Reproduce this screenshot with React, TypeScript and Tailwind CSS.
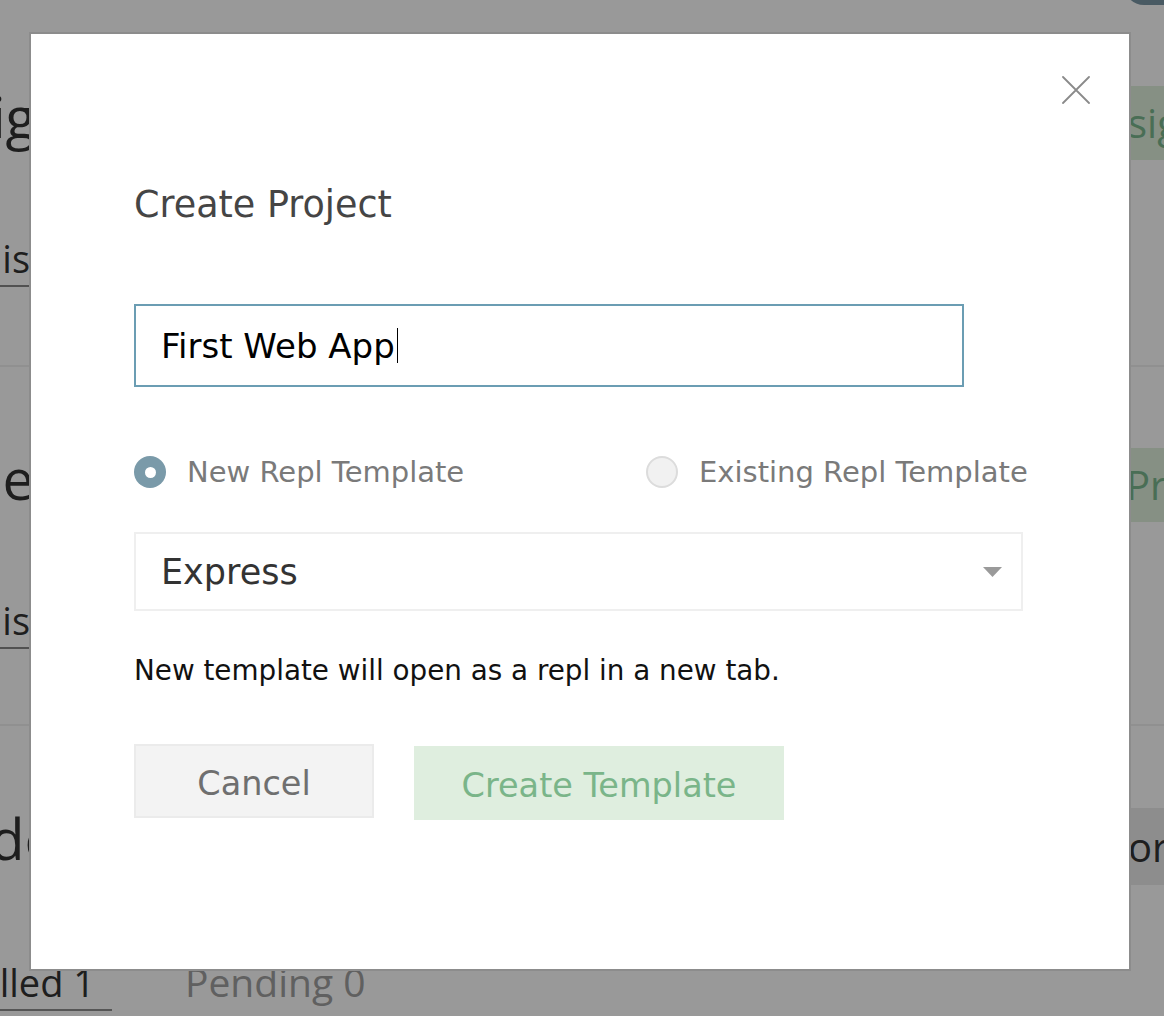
import React from "react";

const BG_FONT = { fontFamily: '"Open Sans", "Liberation Sans", sans-serif' };
const MODAL_FONT = { fontFamily: '"DejaVu Sans", "Liberation Sans", sans-serif' };

function BackgroundPage() {
  return (
    <div className="w-[1164px] h-[1016px] overflow-hidden bg-white flex flex-col" style={BG_FONT}>
      {/* header strip with avatar pill */}
      <div className="h-[5px] flex justify-end">
        <div className="w-[60px] h-[40px] -mt-[35px] mr-[-20px] rounded-[20px] bg-[#7b96a5] shrink-0" />
      </div>

      {/* row 1 */}
      <div className="h-[362px] border-b-2 border-[#f0f0f0] flex items-start pt-[81px]">
        <div className="flex flex-col">
          <div className="w-[36px] flex justify-end">
            <span className="whitespace-nowrap text-[56px] leading-[60px] text-[#333]">Desig</span>
          </div>
          <div className="w-[30px] flex justify-end mt-[90px]">
            <span className="whitespace-nowrap text-[38px] leading-[44px] text-[#333] pb-[5px] border-b-2 border-[#888]">This</span>
          </div>
        </div>
        <div className="flex-1" />
        <div className="w-[64px] h-[74px] shrink-0 bg-[#e0f0dc] flex items-center pl-[28px]">
          <span className="whitespace-nowrap text-[40px] leading-[48px] text-[#7bb78e]">sign</span>
        </div>
      </div>

      {/* row 2 */}
      <div className="h-[359px] border-b-2 border-[#f0f0f0] flex items-start pt-[81px]">
        <div className="flex flex-col">
          <div className="w-[34px] flex justify-end">
            <span className="whitespace-nowrap text-[56px] leading-[60px] text-[#333]">Recipe</span>
          </div>
          <div className="w-[30px] flex justify-end mt-[90px]">
            <span className="whitespace-nowrap text-[38px] leading-[44px] text-[#333] pb-[5px] border-b-2 border-[#888]">This</span>
          </div>
        </div>
        <div className="flex-1" />
        <div className="w-[64px] h-[74px] shrink-0 bg-[#e0f0dc] flex items-center pl-[26px]">
          <span className="whitespace-nowrap text-[40px] leading-[48px] text-[#7bb78e]">Project</span>
        </div>
      </div>

      {/* row 3 */}
      <div className="flex-1 flex items-start pt-[82px]">
        <div className="flex flex-col">
          <div className="w-[56px] flex justify-end">
            <span className="whitespace-nowrap text-[56px] leading-[60px] text-[#333]">Code</span>
          </div>
          <div className="flex items-end mt-[92px]">
            <div className="w-[112px] flex justify-end">
              <span className="whitespace-nowrap text-[38px] leading-[44px] text-[#333] pr-[17px] pb-[5px] border-b-2 border-[#8e8e8e]">Installed 1</span>
            </div>
            <span className="ml-[73px] whitespace-nowrap text-[39px] leading-[44px] text-[#a0a0a0] pb-[7px]">Pending 0</span>
          </div>
        </div>
        <div className="flex-1" />
        <div className="w-[64px] h-[77px] shrink-0 bg-[#ebebeb] flex items-center pl-[28px]">
          <span className="whitespace-nowrap text-[40px] leading-[48px] text-[#333]">or</span>
        </div>
      </div>
    </div>
  );
}

function CloseIcon() {
  return (
    <svg width="28" height="28" viewBox="0 0 28 28" fill="none">
      <path d="M1 1 L27 27 M27 1 L1 27" stroke="#8a8a8a" strokeWidth="1.8" strokeLinecap="round" />
    </svg>
  );
}

function Modal() {
  return (
    <div
      className="fixed left-[29px] top-[32px] w-[1102px] h-[939px] border-2 border-[#8c8c8c] bg-white"
      style={MODAL_FONT}
    >
      <button className="absolute left-[1031px] top-[42px] w-[28px] h-[28px] flex items-center justify-center">
        <CloseIcon />
      </button>

      <div className="pl-[103px] pt-[149px] flex flex-col items-start">
        <h1 className="text-[36.5px] leading-[44px] text-[#454545] font-normal">Create Project</h1>

        <div className="mt-[77px] w-[830px] h-[83px] border-2 border-[#6b9db3] px-[25px] flex items-center">
          <span className="text-[34px] leading-[40px] text-black whitespace-nowrap">First Web App</span>
          <span className="ml-[2px] w-[1px] h-[35px] bg-black" />
        </div>

        <div className="mt-[69px] h-[32px] flex items-center">
          <div className="w-[512px] shrink-0 flex items-center">
            <span className="w-[32px] h-[32px] rounded-full bg-[#7a9aa9] flex items-center justify-center shrink-0">
              <span className="w-[11px] h-[11px] rounded-full bg-white" />
            </span>
            <span className="ml-[21px] text-[29px] leading-[32px] text-[#7a7a7a] whitespace-nowrap">New Repl Template</span>
          </div>
          <div className="flex items-center shrink-0">
            <span className="w-[32px] h-[32px] rounded-full bg-[#f1f1f1] border-2 border-[#dcdcdc] shrink-0" />
            <span className="ml-[21px] text-[29px] leading-[32px] text-[#7a7a7a] whitespace-nowrap">Existing Repl Template</span>
          </div>
        </div>

        <div className="mt-[44px] w-[889px] h-[79px] border-2 border-[#efefef] pl-[25px] pr-[19px] flex items-center justify-between">
          <span className="text-[35px] leading-[40px] text-[#333]">Express</span>
          <svg width="19" height="10" viewBox="0 0 19 10">
            <path d="M0 0 L19 0 L9.5 10 Z" fill="#9a9a9a" />
          </svg>
        </div>

        <p className="mt-[44px] text-[27.8px] leading-[32px] text-[#111] whitespace-nowrap">New template will open as a repl in a new tab.</p>

        <div className="mt-[57px] flex items-start">
          <button className="w-[240px] h-[74px] bg-[#f3f3f3] border-2 border-[#ebebeb] flex items-center justify-center pt-[6px] text-[33.5px] leading-[40px] text-[#6f6f6f]">
            Cancel
          </button>
          <button className="ml-[40px] mt-[2px] w-[370px] h-[74px] bg-[#dfeedf] flex items-center justify-center pt-[6px] text-[33.5px] leading-[40px] text-[#7ab589] whitespace-nowrap">
            Create Template
          </button>
        </div>
      </div>
    </div>
  );
}

export default function App() {
  return (
    <div className="relative w-[1164px] h-[1016px] overflow-hidden">
      <BackgroundPage />
      <div className="fixed inset-0 bg-black/40" />
      <Modal />
    </div>
  );
}
